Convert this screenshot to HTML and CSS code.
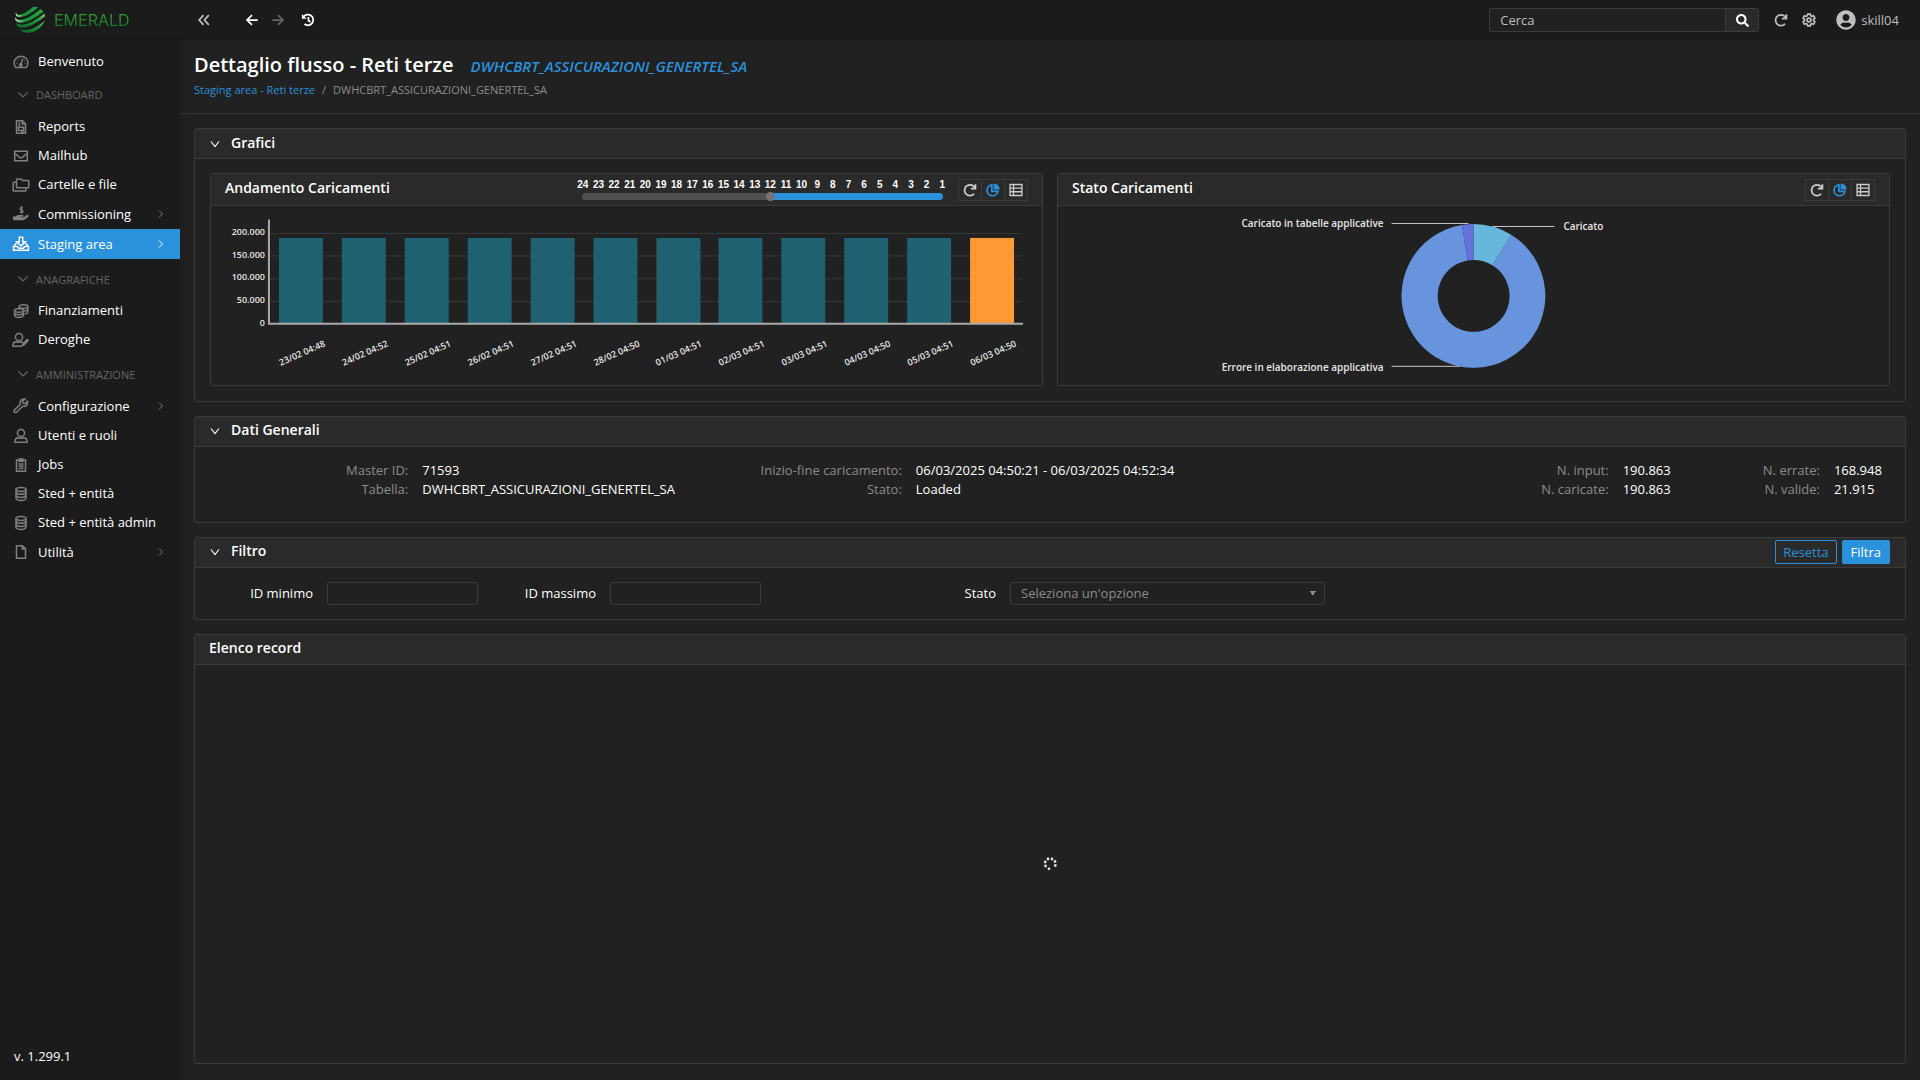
FILE: index.html
```html
<!DOCTYPE html>
<html lang="it">
<head>
<meta charset="utf-8">
<title>Dettaglio flusso - Reti terze</title>
<link rel="stylesheet" href="styles.css">
</head>
<body>
<svg class="sprite" aria-hidden="true">
  <defs>
    <linearGradient id="leaf" x1="0" y1="0" x2="0" y2="1"><stop offset="0" stop-color="#7ccf6a"/><stop offset=".5" stop-color="#1f9a3c"/><stop offset="1" stop-color="#0c6b2a"/></linearGradient>
    <linearGradient id="leaf-side" x1="0" y1="0" x2="1" y2="0"><stop offset="0" stop-color="#b9e6a8"/><stop offset=".35" stop-color="#149238"/><stop offset="1" stop-color="#1fa83f"/></linearGradient>
  </defs>
  <symbol id="chevron-down" viewBox="0 0 12 12"><path d="M2 3.500 6 8.500l4-5"/></symbol>
  <symbol id="chevron-wide" viewBox="0 0 12 12"><path d="M1.500 3.500 6 8l4.500-4.500"/></symbol>
  <symbol id="chevron-right" viewBox="0 0 12 12"><path d="m4 2.500 3.500 3.500L4 9.500"/></symbol>
  <symbol id="gauge" viewBox="0 0 18 16"><path d="M3.500 13.200A6.900 6.900 0 1 1 14.500 13.200Q14.300 13.500 13.800 13.500H4.200Q3.700 13.500 3.500 13.200Z"/><path d="m8.600 11 2.200-6M4.500 9.500h.8M5.600 6h.8M8.500 4.500h.6M12.800 9.500h.8M12.300 6.500h.6"/><circle cx="8.800" cy="11" r="1.200"/></symbol>
  <symbol id="report" viewBox="0 0 18 16"><path d="M4.500 1.700h6l3 3v9.600h-9zM10.300 1.700v3.200h3.200M6.300 4.300h2M6.300 6.200h2M6.500 8.200h5v3.200h-5zM9.500 12.800h2"/></symbol>
  <symbol id="mail" viewBox="0 0 18 16"><path d="M2.700 3.200h12.600v9.600H2.700z"/><path d="m3 5.500 4.700 3.800q1.300 1 2.600 0L15 5.500"/></symbol>
  <symbol id="folders" viewBox="0 0 18 16"><path d="M5 2h4l1.500 1.500H16q.8 0 .8.800V10q0 .8-.8.800H5.300q-.8 0-.8-.8V2.800Q4.500 2 5 2Z"/><path d="M4 5.200H2q-.8 0-.8.800v7.200q0 .8.800.8h11.200q.8 0 .8-.8v-2"/></symbol>
  <symbol id="hand-money" viewBox="0 0 18 16"><path class="fill" d="M1 10.500h2.300l1.500-1q1-.6 2-.6h3.700q1 0 1 .9t-1 1H8.300v.5h3.400l3-2.200q1.200-.6 1.800.2.500.8-.4 1.600l-3.300 2.700q-.8.600-1.800.6H1z"/><path d="M11 2.300Q10.500 1.500 9.500 1.500 8 1.600 8 2.700t1.500 1.300q1.600.2 1.600 1.400T9.500 6.600Q8.300 6.600 7.900 5.800M9.500.3v7.500" stroke-width="1.200"/></symbol>
  <symbol id="inbox" viewBox="0 0 18 16"><path d="M7.300 1.200h3.400v4.500h2.600L9 10 4.700 5.700h2.600z"/><path d="M4.500 7 1.500 10.500v3.800h15v-3.800L13.500 7M1.500 10.500h3.800l1.500 1.700h4.400l1.500-1.700h3.800"/></symbol>
  <symbol id="coins" viewBox="0 0 18 16"><ellipse cx="11.500" cy="3.500" rx="4.300" ry="1.700"/><path d="M7.200 3.500V6M15.800 3.500v6q-.6 1.300-3 1.600M15.700 6.500q-1 1.400-3.500 1.500"/><ellipse cx="7" cy="7.500" rx="4.500" ry="1.700"/><path d="M2.500 7.500v5Q3.500 14.500 7 14.500t4.500-2v-5M2.500 10q1 1.800 4.500 1.800t4.500-1.800"/></symbol>
  <symbol id="user-edit" viewBox="0 0 18 16"><circle cx="7" cy="5" r="3.600"/><path d="M10 14.300H1v-1.500Q1.200 9.800 4 9.700q3 1.200 6 0l1 .3"/><path class="fill" d="m15.200 6.500 2 2-5 5.300-2.700.8.600-2.800z"/></symbol>
  <symbol id="wrench" viewBox="0 0 18 16"><path d="M15.500 3.300 13 5.700l-1.900-.6-.5-1.800L13 1Q10.500.6 9 2.300 7.700 4 8.300 6.200L2.500 12q-.9 1.200 0 2.200 1.100.8 2.200 0L10.500 8.300Q13 9 14.600 7.400 16 5.700 15.500 3.300Z"/></symbol>
  <symbol id="user" viewBox="0 0 18 16"><circle cx="9" cy="5" r="3.600"/><path d="M3 14.300v-1.500q.3-3 3-3.100 3 1.200 6 0 2.700.1 3 3.100v1.500z"/></symbol>
  <symbol id="clipboard" viewBox="0 0 18 16"><path d="M4.500 3h9v11.300h-9zM7 4.200V2.200h1.200Q9 .8 9.800 2.200H11v2zM6.500 7h5M6.500 9.300h5M6.500 11.600h5"/></symbol>
  <symbol id="database" viewBox="0 0 18 16"><ellipse cx="9" cy="3.500" rx="5" ry="1.900"/><path d="M4 3.500v9q1 2 5 2t5-2v-9M4 6.300q1 2 5 2t5-2M4 9.400q1 2 5 2t5-2"/></symbol>
  <symbol id="file" viewBox="0 0 18 16"><path d="M4.500 1.700h6l3 3v9.600h-9zM10.300 1.700v3.200h3.200"/></symbol>
  <symbol id="collapse" viewBox="0 0 16 16"><path d="M7.500 2.500 2.500 8l5 5.500M13.500 2.500 8.500 8l5 5.500"/></symbol>
  <symbol id="arrow-left" viewBox="0 0 16 16"><path d="M14.500 8h-12M8 2.300 2.300 8 8 13.700"/></symbol>
  <symbol id="arrow-right" viewBox="0 0 16 16"><path d="M1.500 8h12M8 2.300 13.700 8 8 13.700"/></symbol>
  <symbol id="history" viewBox="0 0 16 16"><path d="M2.700 4.700A6.100 6.100 0 1 1 4 12.600"/><path d="M8.500 4.500v4l2.300 1.700"/><path class="fill" d="M1 1v5.500h5.500z"/></symbol>
  <symbol id="refresh" viewBox="0 0 16 16"><path d="M13.800 6.200A6.200 6.200 0 1 0 12.700 12.300M14.200 1.500v5H9"/></symbol>
  <symbol id="gear" viewBox="0 0 16 16"><circle cx="8" cy="8" r="2.200"/><path d="M6.500 1.200h3l.5 2 1.200.7 2-.6 1.500 2.600L13.200 7.300v1.400l1.500 1.400-1.500 2.600-2-.6-1.200.7-.5 2h-3l-.5-2-1.200-.7-2 .6-1.500-2.600 1.500-1.400V7.300L1.300 5.900l1.500-2.600 2 .6L6 3.200z"/></symbol>
  <symbol id="pie" viewBox="0 0 16 16"><path d="M6.700 2.200A6.200 6.200 0 1 0 13.500 9.500H6.700z"/><path class="fill" d="M8.700.5a7 7 0 0 1 7 7h-7z"/></symbol>
  <symbol id="grid" viewBox="0 0 16 16"><path d="M1.200 1.700h13.600v12.600H1.200zM5.200 1.700v12.600M1.200 5.800h13.600M1.200 10h13.600"/></symbol>
  <symbol id="search" viewBox="0 0 512 512"><path class="fill" d="M505 442.700L405.300 343c-4.500-4.500-10.600-7-17-7H372c27.600-35.300 44-79.700 44-128C416 93.100 322.900 0 208 0S0 93.100 0 208s93.100 208 208 208c48.300 0 92.700-16.400 128-44v16.300c0 6.400 2.500 12.500 7 17l99.700 99.700c9.400 9.400 24.600 9.400 33.900 0l28.300-28.300c9.400-9.400 9.400-24.600.1-34zM208 336c-70.700 0-128-57.200-128-128 0-70.700 57.200-128 128-128 70.700 0 128 57.200 128 128 0 70.700-57.200 128-128 128z"/></symbol>
  <symbol id="avatar" viewBox="0 0 496 512"><path class="fill" d="M248 8C111 8 0 119 0 256s111 248 248 248 248-111 248-248S385 8 248 8zm0 96c48.600 0 88 39.400 88 88s-39.400 88-88 88-88-39.400-88-88 39.400-88 88-88zm0 344c-58.700 0-111.300-26.600-146.500-68.200 18.800-35.400 55.600-59.800 98.500-59.800 2.400 0 4.800.4 7.100 1.100 13 4.200 26.600 6.900 40.900 6.900 14.300 0 28-2.700 40.900-6.900 2.300-.7 4.700-1.100 7.100-1.100 42.900 0 79.700 24.400 98.500 59.800C359.300 421.400 306.700 448 248 448z"/></symbol>
</svg>

<header class="topbar">
  <a class="brand" href="#" aria-label="Emerald">
    <svg class="brand-mark" viewBox="0 0 32 28"><path fill="url(#leaf-side)" d="M2 5.500Q1 9 3 10.500 10 13.500 24 1.500 22 .5 19.500.8 10 8.500 5 9 2 8.800 2 5.500Z"/><path fill="url(#leaf-side)" d="M1 11q-.5 4 3.500 5.500Q14 18 29.500 5.500L26.500 3Q14 13.500 6 14 2 13.800 1 11Z"/><path fill="url(#leaf)" d="M2 17q1 4 5 4.800Q17 22 31 10.500L30.500 7.500Q17 18.500 7.500 18.800 4 18.800 2 17Z"/><path fill="url(#leaf)" d="M6 23.500q3.500 3.500 9 3.300Q26 25.500 31 14.500 21 23.500 12 24.300 8.500 24.500 6 23.500Z"/></svg>
    <span class="brand-name">EMERALD</span>
  </a>
  <button class="tool" aria-label="Riduci menu"><svg class="icon i-line"><use href="#collapse"/></svg></button>
  <div class="history-tools">
    <button class="tool bright" aria-label="Indietro"><svg class="icon i-line bold"><use href="#arrow-left"/></svg></button>
    <button class="tool faint" aria-label="Avanti"><svg class="icon i-line bold"><use href="#arrow-right"/></svg></button>
  </div>
  <button class="tool bright" aria-label="Cronologia"><svg class="icon i-line"><use href="#history"/></svg></button>
  <form class="search">
    <input type="text" placeholder="Cerca" aria-label="Cerca">
    <button type="button" aria-label="Avvia ricerca"><svg class="icon small"><use href="#search"/></svg></button>
  </form>
  <div class="user-tools">
    <button class="tool" aria-label="Aggiorna"><svg class="icon i-line"><use href="#refresh"/></svg></button>
    <button class="tool" aria-label="Impostazioni"><svg class="icon i-line"><use href="#gear"/></svg></button>
  </div>
  <a class="account" href="#"><svg class="avatar"><use href="#avatar"/></svg>skill04</a>
</header>

<div class="shell">
  <nav class="sidebar">
    <ul>
      <li><a class="item" href="#"><svg class="nav-icon"><use href="#gauge"/></svg>Benvenuto</a></li>
    </ul>
    <button class="group"><svg class="chev"><use href="#chevron-wide"/></svg>DASHBOARD</button>
    <ul>
      <li><a class="item" href="#"><svg class="nav-icon"><use href="#report"/></svg>Reports</a></li>
      <li><a class="item" href="#"><svg class="nav-icon"><use href="#mail"/></svg>Mailhub</a></li>
      <li><a class="item" href="#"><svg class="nav-icon"><use href="#folders"/></svg>Cartelle e file</a></li>
      <li><a class="item parent" href="#"><svg class="nav-icon"><use href="#hand-money"/></svg>Commissioning<svg class="chev"><use href="#chevron-right"/></svg></a></li>
      <li><a class="item parent active" href="#"><svg class="nav-icon"><use href="#inbox"/></svg>Staging area<svg class="chev"><use href="#chevron-right"/></svg></a></li>
    </ul>
    <button class="group"><svg class="chev"><use href="#chevron-wide"/></svg>ANAGRAFICHE</button>
    <ul>
      <li><a class="item" href="#"><svg class="nav-icon"><use href="#coins"/></svg>Finanziamenti</a></li>
      <li><a class="item" href="#"><svg class="nav-icon"><use href="#user-edit"/></svg>Deroghe</a></li>
    </ul>
    <button class="group"><svg class="chev"><use href="#chevron-wide"/></svg>AMMINISTRAZIONE</button>
    <ul>
      <li><a class="item parent" href="#"><svg class="nav-icon"><use href="#wrench"/></svg>Configurazione<svg class="chev"><use href="#chevron-right"/></svg></a></li>
      <li><a class="item" href="#"><svg class="nav-icon"><use href="#user"/></svg>Utenti e ruoli</a></li>
      <li><a class="item" href="#"><svg class="nav-icon"><use href="#clipboard"/></svg>Jobs</a></li>
      <li><a class="item" href="#"><svg class="nav-icon"><use href="#database"/></svg>Sted + entità</a></li>
      <li><a class="item" href="#"><svg class="nav-icon"><use href="#database"/></svg>Sted + entità admin</a></li>
      <li><a class="item parent" href="#"><svg class="nav-icon"><use href="#file"/></svg>Utilità<svg class="chev"><use href="#chevron-right"/></svg></a></li>
    </ul>
    <p class="version">v. 1.299.1</p>
  </nav>

  <main class="content">
    <header class="page-head">
      <h1>Dettaglio flusso - Reti terze <em>DWHCBRT_ASSICURAZIONI_GENERTEL_SA</em></h1>
      <p class="crumbs"><a href="#">Staging area - Reti terze</a><span>/</span><span>DWHCBRT_ASSICURAZIONI_GENERTEL_SA</span></p>
    </header>

    <div class="panels">
      <section class="panel">
        <header class="panel-head"><button class="fold" aria-label="Comprimi Grafici"><svg class="chev"><use href="#chevron-down"/></svg></button><h2>Grafici</h2></header>
        <div class="charts">
          <section class="panel">
            <header class="panel-head chart-head">
              <h3>Andamento Caricamenti</h3>
              <div class="range">
                <div class="ticks"><span>24</span><span>23</span><span>22</span><span>21</span><span>20</span><span>19</span><span>18</span><span>17</span><span>16</span><span>15</span><span>14</span><span>13</span><span>12</span><span>11</span><span>10</span><span>9</span><span>8</span><span>7</span><span>6</span><span>5</span><span>4</span><span>3</span><span>2</span><span>1</span></div>
                <input type="range" min="1" max="24" value="12" aria-label="Numero di caricamenti">
              </div>
              <div class="views">
                <button aria-label="Aggiorna"><svg class="icon i-line"><use href="#refresh"/></svg></button>
                <button class="on" aria-label="Grafico"><svg class="icon i-line"><use href="#pie"/></svg></button>
                <button aria-label="Tabella"><svg class="icon i-line thin"><use href="#grid"/></svg></button>
              </div>
            </header>
            <svg class="chart" viewBox="0 0 832 179" role="img" aria-label="Andamento Caricamenti">
              <g class="grid-lines"><path d="M58 27.500H812M58 50H812M58 73H812M58 95.500H812"/></g>
              <g class="bars">
                <rect x="68" y="32" width="44" height="86"/><rect x="131" y="32" width="44" height="86"/><rect x="194" y="32" width="44" height="86"/><rect x="257" y="32" width="44" height="86"/><rect x="320" y="32" width="44" height="86"/><rect x="383" y="32" width="44" height="86"/><rect x="446" y="32" width="44" height="86"/><rect x="508" y="32" width="44" height="86"/><rect x="571" y="32" width="44" height="86"/><rect x="634" y="32" width="44" height="86"/><rect x="697" y="32" width="44" height="86"/><rect class="last" x="760" y="32" width="44" height="86"/>
              </g>
              <path class="axis" d="M58 13.500V118H813"/>
              <g class="y-labels"><text x="54" y="29">200.000</text><text x="54" y="52">150.000</text><text x="54" y="74">100.000</text><text x="54" y="97">50.000</text><text x="54" y="120">0</text></g>
              <g class="x-labels">
                <text transform="translate(115 140) rotate(-24)">23/02 04:48</text><text transform="translate(178 140) rotate(-24)">24/02 04:52</text><text transform="translate(241 140) rotate(-24)">25/02 04:51</text><text transform="translate(304 140) rotate(-24)">26/02 04:51</text><text transform="translate(367 140) rotate(-24)">27/02 04:51</text><text transform="translate(430 140) rotate(-24)">28/02 04:50</text><text transform="translate(492 140) rotate(-24)">01/03 04:51</text><text transform="translate(555 140) rotate(-24)">02/03 04:51</text><text transform="translate(618 140) rotate(-24)">03/03 04:51</text><text transform="translate(681 140) rotate(-24)">04/03 04:50</text><text transform="translate(744 140) rotate(-24)">05/03 04:51</text><text transform="translate(807 140) rotate(-24)">06/03 04:50</text>
              </g>
            </svg>
          </section>

          <section class="panel">
            <header class="panel-head chart-head">
              <h3>Stato Caricamenti</h3>
              <div class="views">
                <button aria-label="Aggiorna"><svg class="icon i-line"><use href="#refresh"/></svg></button>
                <button class="on" aria-label="Grafico"><svg class="icon i-line"><use href="#pie"/></svg></button>
                <button aria-label="Tabella"><svg class="icon i-line thin"><use href="#grid"/></svg></button>
              </div>
            </header>
            <svg class="chart" viewBox="0 0 832 179" role="img" aria-label="Stato Caricamenti">
              <path fill="#6794dc" d="M453.700 28.700A72 72 0 1 1 404.500 18.900L410.200 54.500A36 36 0 1 0 434.900 59.300Z"/>
              <path fill="#67b7dc" d="M416 18A72 72 0 0 1 453.700 28.700L434.900 59.300A36 36 0 0 0 416 54Z"/>
              <path fill="#6771dc" d="M404.500 18.900A72 72 0 0 1 416 18V54A36 36 0 0 0 410.200 54.500Z"/>
              <path class="leader" d="M334 17.500H411M435 20.500H497M334 160.500H402"/>
              <g class="pie-labels"><text class="end" x="326" y="21">Caricato in tabelle applicative</text><text x="506" y="24">Caricato</text><text class="end" x="326" y="165">Errore in elaborazione applicativa</text></g>
            </svg>
          </section>
        </div>
      </section>

      <section class="panel">
        <header class="panel-head"><button class="fold" aria-label="Comprimi Dati Generali"><svg class="chev"><use href="#chevron-down"/></svg></button><h2>Dati Generali</h2></header>
        <dl class="facts">
          <dt>Master ID:</dt><dd>71593</dd><dt>Inizio-fine caricamento:</dt><dd>06/03/2025 04:50:21 - 06/03/2025 04:52:34</dd><dt>N. input:</dt><dd>190.863</dd><dt>N. errate:</dt><dd>168.948</dd>
          <dt>Tabella:</dt><dd>DWHCBRT_ASSICURAZIONI_GENERTEL_SA</dd><dt>Stato:</dt><dd>Loaded</dd><dt>N. caricate:</dt><dd>190.863</dd><dt>N. valide:</dt><dd>21.915</dd>
        </dl>
      </section>

      <section class="panel">
        <header class="panel-head"><button class="fold" aria-label="Comprimi Filtro"><svg class="chev"><use href="#chevron-down"/></svg></button><h2>Filtro</h2>
          <div class="actions"><button class="btn" type="reset" form="filter">Resetta</button><button class="btn primary" type="button">Filtra</button></div>
        </header>
        <form class="filter" id="filter">
          <label for="id-min">ID minimo</label><input id="id-min" type="text">
          <label for="id-max">ID massimo</label><input id="id-max" type="text">
          <label for="state">Stato</label>
          <select id="state"><option>Seleziona un'opzione</option></select>
        </form>
      </section>

      <section class="panel records">
        <header class="panel-head"><h2>Elenco record</h2></header>
        <div class="loading" role="status" aria-label="Caricamento">
          <svg class="spinner" viewBox="0 0 14 14"><circle cx="5" cy="2" r="1.400"/><circle cx="9" cy="2" r="1.400"/><circle cx="12" cy="4.500" r="1.400"/><circle cx="12.300" cy="8.500" r="1.400"/><circle cx="2.200" cy="5" r="1.400"/><circle cx="2.500" cy="9" r="1.400"/><circle cx="6" cy="11.800" r="1.400"/></svg>
        </div>
      </section>
    </div>
  </main>
</div>
</body>
</html>
```
FILE: styles.css
```css
:root {
  --bar: #1b1b1b;
  --page: #212121;
  --head: #2a2a2a;
  --line: #3b3b3b;
  --blue: #2a91dd;
  --muted: #8c8c8c;
}

* { box-sizing: border-box; }

body {
  margin: 0;
  min-height: 100vh;
  display: flex;
  flex-direction: column;
  background: var(--page);
  color: #fff;
  font: 13px/19px "Open Sans", "Noto Sans", sans-serif;
}

h1, h2, h3, p, ul, dl, dd { margin: 0; padding: 0; }
ul { list-style: none; }
a { color: inherit; text-decoration: none; }
button, input, select { font: inherit; color: inherit; }
button { display: flex; align-items: center; justify-content: center; margin: 0; padding: 0; border: 0; background: none; }

.sprite { position: absolute; width: 0; height: 0; }
.fill { fill: currentColor; stroke: none; }
.icon { width: 14px; height: 14px; fill: currentColor; }
.icon.small { width: 13px; height: 13px; }
.i-line { fill: none; stroke: currentColor; stroke-width: 2; }
.i-line.thin { stroke-width: 1.5; }
.chev { width: 12px; height: 12px; fill: none; stroke: currentColor; stroke-width: 1.2; }

/* Top bar */
.topbar { display: flex; align-items: center; height: 40px; padding-right: 21px; background: var(--bar); }
.brand { display: flex; align-items: center; gap: 8px; width: 180px; padding-left: 14px; }
.brand-mark { width: 32px; height: 28px; }
.brand-name {
  font: 16px/20px "Inter", sans-serif;
  background: linear-gradient(#3aa62f, #0d6b2f);
  background-clip: text;
  -webkit-background-clip: text;
  color: transparent;
}
.tool { width: 16px; height: 24px; color: #bfbfbf; }
.topbar > .tool:nth-of-type(1) { margin-left: 16px; }
.tool.bright { color: #fff; }
.tool.faint { color: #666; }
.history-tools { display: flex; gap: 10px; margin: 0 14px 0 32px; }
.search { display: flex; width: 270px; height: 24px; margin-left: auto; border: 1px solid var(--line); border-radius: 2px; }
.search input { flex: 1; min-width: 0; padding: 0 10px; border: 0; background: var(--page); outline: 0; }
.search input::placeholder { color: #bfbfbf; opacity: 1; }
.search button { width: 33px; border-left: 1px solid var(--line); background: var(--head); }
.user-tools { display: flex; gap: 12px; margin: 0 19px 0 14px; }
.account { display: flex; align-items: center; gap: 5px; color: #bfbfbf; }
.avatar { width: 20px; height: 20px; }

/* Side navigation */
.shell { flex: 1; display: flex; }
.sidebar { display: flex; flex-direction: column; width: 180px; padding: 7px 0 14px; background: var(--bar); box-shadow: 0 0 6px rgba(0, 0, 0, .25); }
.item { display: flex; align-items: center; gap: 8px; height: 29px; padding: 0 13px 0 12px; }
.item.parent { height: 30px; }
.item .chev { margin-left: auto; color: #808080; stroke-width: 1; }
.nav-icon { width: 18px; height: 16px; color: #808080; fill: none; stroke: currentColor; stroke-width: 1.5; }
.item.active { background: var(--blue); }
.item.active .nav-icon, .item.active .chev { color: #fff; }
.group { justify-content: flex-start; gap: 7px; height: 36px; padding: 1px 0 0 17px; color: #666; font-size: 11px; }
.group ~ .group { height: 37px; padding-top: 3px; }
.version { margin-top: auto; padding-left: 14px; }

/* Page */
.content { flex: 1; min-width: 0; display: flex; flex-direction: column; }
.page-head { height: 74px; padding: 11px 14px 0; border-bottom: 1px solid #333; }
h1 { font-size: 20px; font-weight: 600; line-height: 27px; }
h1 em { margin-left: 12px; color: var(--blue); font-size: 15px; }
.crumbs { display: flex; gap: 7px; color: var(--muted); font-size: 11px; }
.crumbs a { color: var(--blue); }
.panels { flex: 1; display: flex; flex-direction: column; gap: 14px; padding: 14px 14px 16px; }
.panel { border: 1px solid var(--line); border-radius: 3px; }
.panel-head { display: flex; align-items: center; height: 30px; padding: 0 15px 0 14px; border-bottom: 1px solid var(--line); background: var(--head); }
h2, h3 { font-size: 14px; font-weight: 600; line-height: 20px; }
h2 { padding-bottom: 2px; }
h3 { padding-bottom: 4px; }
.fold { margin-right: 10px; }

/* Charts */
.charts { display: grid; grid-template-columns: 1fr 1fr; gap: 14px; padding: 14px 15px 15px; }
.chart-head { height: 32px; }
.views { display: flex; }
.chart-head h3 { margin-right: auto; }
.chart-head .views { margin-right: -1px; }
.views button { width: 24px; height: 22px; border: 1px solid var(--line); color: #ccc; }
.views button + button { border-left: 0; width: 23px; }
.views .on { color: var(--blue); }
.range { width: 375px; margin-right: 8px; }
.ticks { display: grid; grid-template-columns: repeat(24, 1fr); font: bold 10px/12px "Liberation Sans", Arial, sans-serif; text-align: center; }
.range input { display: block; width: 361px; height: 9px; margin: 1px auto 0; direction: rtl; appearance: none; background: none; }
.range input::-webkit-slider-runnable-track { height: 7px; border-radius: 4px; background: linear-gradient(to right, #505050 52%, var(--blue) 52%); }
.range input::-webkit-slider-thumb { appearance: none; width: 9px; height: 9px; margin-top: -1px; border-radius: 50%; background: #757575; }
.chart { display: block; width: 100%; height: auto; }
.grid-lines { stroke: #383838; }
.bars { fill: #1f6170; }
.bars .last { fill: #ff9933; }
.axis { fill: none; stroke: #aaa; stroke-width: 2; }
.chart text { fill: #e6e6e6; font-size: 9px; font-weight: 600; }
.chart .y-labels text, .chart .x-labels text { text-anchor: end; }
.chart .pie-labels text { font-size: 10px; }
.chart .pie-labels .end { text-anchor: end; }
.leader { stroke: #c8c8c8; }

/* General data */
.facts { display: grid; grid-template-columns: 213fr 250fr 215fr 384fr 294fr 78fr 105fr 71fr; column-gap: 14px; padding: 14px 0 23px; white-space: nowrap; }
.facts > * { min-width: 0; }
.facts dt { text-align: right; color: var(--muted); }

/* Filter */
.actions { display: flex; gap: 5px; margin-left: auto; }
.btn { height: 24px; padding: 0 7px; border: 1px solid var(--blue); border-radius: 2px; color: var(--blue); }
.btn.primary { padding: 0 8px; background: var(--blue); color: #fff; }
.filter { display: grid; grid-template-columns: 118fr 151fr 104fr 151fr 221fr 315fr 566fr; gap: 14px; align-items: center; padding: 14px 0; }
.filter label { text-align: right; }
.filter input, .filter select { width: 100%; min-width: 0; height: 23px; padding: 0 10px; border: 1px solid var(--line); border-radius: 2px; background: var(--page); outline: 0; }
.filter select {
  appearance: none;
  color: var(--muted);
  background: linear-gradient(to bottom right, var(--muted) 50%, transparent 50%) right 8px center / 3px 5px no-repeat,
    linear-gradient(to bottom left, var(--muted) 50%, transparent 50%) right 11px center / 3px 5px no-repeat;
}

/* Records */
.records { flex: 1; display: flex; flex-direction: column; }
.loading { flex: 1; display: flex; align-items: center; justify-content: center; }
.spinner { width: 14px; height: 14px; fill: #e0e0e0; }
```
